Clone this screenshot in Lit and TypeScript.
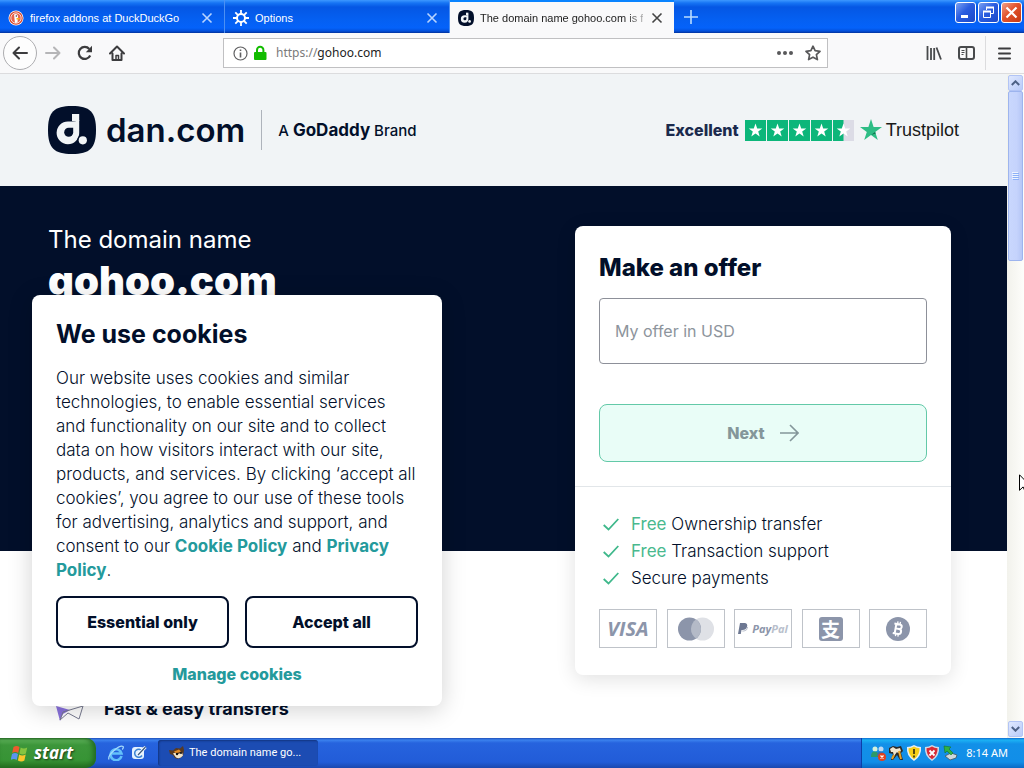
import { LitElement, html, css } from "lit";
import { customElement } from "lit/decorators.js";

@customElement("browser-chrome")
class BrowserChrome extends LitElement {
  static styles = css`
    :host { display: block; font: 12px/16px "Noto Sans", "Open Sans", sans-serif; }
    button { font: inherit; color: inherit; background: none; border: 0; padding: 0; display: flex; align-items: center; justify-content: center; }
    svg { display: block; flex: none; }
    .tabs { display: flex; height: 33px; box-sizing: border-box; color: #fff; background: linear-gradient(#3d98ff 0, #1674f4 3px, #0557e4 7px, #0560f2 20px, #0462fa 28px, #0350da 31px, #02329c 33px); }
    .tab { display: flex; align-items: center; gap: 6px; width: 225px; box-sizing: border-box; padding: 2px 9px 0 8px; border-right: 1px solid #4c90f3; font: 11px/16px "Liberation Sans", sans-serif; }
    .tab .label { flex: 1; min-width: 0; white-space: nowrap; overflow: hidden; }
    .tab button { width: 16px; height: 16px; }
    .tab.active { color: #222; background: #f9f9fa; border-right: 0; border-top: 2px solid #0a84ff; padding-top: 0; width: 224px; }
    .tab.active .label { mask-image: linear-gradient(to right, #000 145px, transparent 172px); }
    .add { width: 34px; }
    .controls { margin-left: auto; display: flex; gap: 2px; padding: 2px 2px 0 0; }
    .controls button { width: 21px; height: 21px; border: 1px solid #fff; border-radius: 3px; background: linear-gradient(135deg, #7ba1f2, #2a5de0 45%, #1c49c8); }
    .controls .close { background: linear-gradient(135deg, #f0a08a, #e2532c 45%, #c53a14); }
    .bar { display: flex; align-items: center; height: 41px; box-sizing: border-box; padding: 0 11px 0 3px; background: #f9f9fa; border-bottom: 1px solid #dcdcde; }
    .back { width: 34px; height: 34px; border: 1px solid #adadb0; border-radius: 50%; background: #fdfdfd; }
    .nav { display: flex; align-items: center; flex: none; }
    .nav .tool { width: 32px; height: 32px; }
    .url { flex: 1; margin: 0 90px; height: 30px; box-sizing: border-box; border: 1px solid #c0c0c2; background: #fff; display: flex; align-items: center; padding: 0 6px 0 8px; gap: 4px; }
    .field { flex: 1; min-width: 0; display: grid; padding-left: 4px; }
    .field input, .field span { grid-area: 1 / 1; font: inherit; }
    .field input { border: 0; padding: 0; background: none; outline: none; color: transparent; min-width: 0; }
    .field span { pointer-events: none; color: #222; white-space: nowrap; }
    .field i { font-style: normal; color: #7a7a7a; }
    .url .icon { width: 16px; height: 16px; }
    .actions { display: flex; gap: 12px; }
    .right { display: flex; align-items: center; }
    .right button { width: 32px; height: 32px; }
    .sep { width: 1px; height: 34px; background: #dcdcde; margin: 0 3px; }
    .right .menu { width: 24px; padding-left: 6px; }
  `;
  x(color: string) {
    return html`<svg width="12" height="12" viewBox="0 0 12 12"><path d="M1.500 1.500l9 9m0-9l-9 9" stroke=${color} stroke-width="1.600" fill="none"/></svg>`;
  }
  render() {
    return html`
      <div class="tabs">
        <div class="tab">
          <svg width="16" height="16" viewBox="0 0 16 16"><circle cx="8" cy="8" r="7.500" fill="#fff"/><circle cx="8" cy="8" r="6.800" fill="#d9472b"/><circle cx="8" cy="8" r="5.200" fill="#e8634a" stroke="#fff" stroke-width=".8"/><path d="M6 4.500q3-1.500 4 1.500l-.5 6.500-2.500.4z" fill="#fff"/><path d="M8.500 8h3.500l-1 1.500H8.500z" fill="#f6b51e"/><circle cx="8.300" cy="6" r=".7" fill="#223"/></svg>
          <span class="label">firefox addons at DuckDuckGo</span>
          <button aria-label="Close tab">${this.x("#b8d4ff")}</button>
        </div>
        <div class="tab">
          <svg width="16" height="16" viewBox="0 0 16 16" fill="none" stroke="#fff"><circle cx="8" cy="8" r="4" stroke-width="2"/><path d="M8 0v4M8 12v4M0 8h4M12 8h4M2.300 2.300l3 3M10.700 10.700l3 3M2.300 13.700l3-3M10.700 5.300l3-3" stroke-width="1.800"/></svg>
          <span class="label">Options</span>
          <button aria-label="Close tab">${this.x("#b8d4ff")}</button>
        </div>
        <div class="tab active">
          <dan-mark style="--size:16px"></dan-mark>
          <span class="label">The domain name gohoo.com is fo</span>
          <button aria-label="Close tab">${this.x("#444")}</button>
        </div>
        <button class="add" aria-label="New tab"><svg width="14" height="14" viewBox="0 0 14 14"><path d="M7 0v14M0 7h14" stroke="#b9dcff" stroke-width="1.600"/></svg></button>
        <div class="controls">
          <button aria-label="Minimise"><svg width="15" height="15"><path d="M3 10h7v3H3z" fill="#fff"/></svg></button>
          <button aria-label="Restore"><svg width="15" height="15" fill="none" stroke="#fff"><path d="M5.500 5V2.500h7v6H10" /><path d="M5 2.500h8M2 6.500h8" stroke-width="2"/><path d="M2.500 6.500h7v6h-7z"/></svg></button>
          <button class="close" aria-label="Close"><svg width="15" height="15"><path d="M2.500 2.500l10 10m0-10l-10 10" stroke="#fff" stroke-width="2.200"/></svg></button>
        </div>
      </div>
      <div class="bar">
        <div class="nav">
          <button class="back" aria-label="Back"><svg width="16" height="16" viewBox="0 0 16 16" fill="none" stroke="#3c3c3e" stroke-width="2" stroke-linecap="round" stroke-linejoin="round"><path d="M15 8H1.500M7 2.500L1.500 8 7 13.500"/></svg></button>
          <button class="tool" aria-label="Forward"><svg width="16" height="16" viewBox="0 0 16 16" fill="none" stroke="#b5b5b7" stroke-width="2" stroke-linecap="round" stroke-linejoin="round"><path d="M1 8h13.500M9 2.500L14.500 8 9 13.500"/></svg></button>
          <button class="tool" aria-label="Reload"><svg width="16" height="16" viewBox="0 0 16 16" fill="none" stroke="#3c3c3e" stroke-width="2.200"><path d="M13.200 10.500A6 6 0 1 1 12.300 4"/><path d="M15 .8v6.400H8.800z" fill="#3c3c3e" stroke="none"/></svg></button>
          <button class="tool" aria-label="Home"><svg width="16" height="16" viewBox="0 0 16 16" fill="none" stroke="#3c3c3e" stroke-width="2" stroke-linecap="round" stroke-linejoin="round"><path d="M1 8.500L8 1.500l7 7M3.500 8.500V15h9V8.500"/><path d="M7 15v-4.500h2.500V15" stroke-width="1.500"/></svg></button>
        </div>
        <div class="url">
          <button class="icon" aria-label="Site information"><svg width="15" height="15" viewBox="0 0 15 15" fill="none" stroke="#606062"><circle cx="7.500" cy="7.500" r="6.500" stroke-width="1.200"/><path d="M7.500 6.500v5M7.500 3.500v1.600" stroke-width="1.600"/></svg></button>
          <svg width="16" height="16" viewBox="0 0 16 16"><rect x="2" y="7" width="12.500" height="8" rx="1" fill="#12bc00"/><path d="M5 8V5a3.200 3.200 0 0 1 6.400 0v3" fill="none" stroke="#12bc00" stroke-width="2"/></svg>
          <label class="field"><input aria-label="Address" value="https://gohoo.com"><span aria-hidden="true"><i>https://</i>gohoo.com</span></label>
          <div class="actions">
            <button class="icon" aria-label="Page actions"><svg width="16" height="4" fill="#58585a"><circle cx="2" cy="2" r="2"/><circle cx="8" cy="2" r="2"/><circle cx="14" cy="2" r="2"/></svg></button>
            <button class="icon" aria-label="Bookmark"><svg width="16" height="16" viewBox="0 0 16 16"><path d="M8 1.200l2.100 4.500 4.900.6-3.600 3.400 1 4.900L8 12.200l-4.400 2.400 1-4.900L1 6.300l4.900-.6z" fill="none" stroke="#58585a" stroke-width="1.700" stroke-linejoin="round"/></svg></button>
          </div>
        </div>
        <div class="right">
          <button aria-label="Library"><svg width="16" height="16" viewBox="0 0 16 16" stroke="#484a4c" stroke-width="1.800"><path d="M1.500 1v14M5 3v12M8.200 3v12M10.500 2.500l4.500 12"/></svg></button>
          <button aria-label="Sidebars"><svg width="17" height="16" viewBox="0 0 17 16" fill="none" stroke="#484a4c"><rect x="1" y="2" width="15" height="12" rx="2" stroke-width="2"/><path d="M8.500 2v12" stroke-width="1.600"/><path d="M3.500 5.500h3M3.500 7.500h3M3.500 9.500h2"/></svg></button>
          <span class="sep"></span>
          <button class="menu" aria-label="Menu"><svg width="13" height="13" stroke="#3c3c3e" stroke-width="2" stroke-linecap="round"><path d="M1 1.500h11M1 6.500h11M1 11.500h11"/></svg></button>
        </div>
      </div>`;
  }
}

@customElement("dan-mark")
class DanMark extends LitElement {
  static styles = css`
    :host { display: block; flex: none; width: var(--size); height: var(--size); }
    svg { display: block; width: 100%; height: 100%; }
  `;
  render() {
    return html`<svg viewBox="0 0 48 48"><path d="M24 0C42 0 48 6 48 24S42 48 24 48 0 42 0 24 6 0 24 0z" fill="#020f2a"/><path d="M24 8h7.200v7H24z" fill="#f1f4f6"/><path d="M20 15.600h3.600q3.600 0 7.600-1.600V27A11.300 11.300 0 1 1 20 15.600z" fill="#f1f4f6"/><path d="M20.700 21.800h4.500V26.300a4.500 4.500 0 1 1-4.500-4.500z" fill="#020f2a"/><circle cx="34.800" cy="34.300" r="5.600" fill="#020f2a"/><circle cx="34.800" cy="34.300" r="4.100" fill="#f1f4f6"/></svg>`;
  }
}

@customElement("site-header")
class SiteHeader extends LitElement {
  static styles = css`
    :host { display: flex; justify-content: space-between; align-items: center; box-sizing: border-box; min-height: 112px; padding: 32px 48px; background: #f1f4f6; color: #020f2a; }
    .logo { display: flex; align-items: center; color: inherit; text-decoration: none; }
    .name { font: 600 33px/40px Inter, sans-serif; margin-left: 10px; }
    .rule { width: 1px; height: 40px; margin: 0 16px; background: #aeb3bb; }
    .brand { font: 500 15px/20px Inter, sans-serif; }
    .brand b { font-weight: 700; font-size: 17px; }
    .trust { display: flex; align-items: center; gap: 6px; color: #1b2a4d; text-decoration: none; font: 800 16px/24px Inter, sans-serif; }
    .stars, .pilot { display: flex; }
    .stars { gap: 1px; }
    .pilot { align-items: center; color: #191919; font: 400 18px/24px "Liberation Sans", sans-serif; gap: 4px; }
    svg { display: block; }
  `;
  render() {
    const star = "M10.500 3.500l1.700 4.900h5.100l-4.100 3.100 1.500 5-4.200-3-4.200 3 1.500-5-4.100-3.100h5.100z";
    return html`
      <a class="logo" href="#">
        <dan-mark style="--size:48px"></dan-mark>
        <span class="name">dan.com</span><span class="rule"></span>
        <span class="brand">A <b>GoDaddy</b> Brand</span>
      </a>
      <a class="trust" href="#">
        <span>Excellent</span>
        <span class="stars">${[1, 1, 1, 1, 0.5].map(f => html`<svg width="21" height="21" viewBox="0 0 21 21"><rect width="21" height="21" fill="#dcdce6"/><rect width=${21 * f} height="21" fill="#0cb67a"/><path d=${star} fill="#fff"/></svg>`)}</span>
        <span class="pilot"><svg width="22" height="22" viewBox="0 0 22 22"><path d="M11 0l2.600 8H22l-6.800 5 2.600 8L11 16.100 4.200 21l2.600-8L0 8h8.400z" fill="#2ebd85"/><path d="M15.700 14.500l-.6-1.600L11 16.100z" fill="#0b6e4a"/></svg>Trustpilot</span>
      </a>`;
  }
}

@customElement("offer-card")
class OfferCard extends LitElement {
  static styles = css`
    :host { display: block; background: #fff; border-radius: 8px; color: #020f2a; box-shadow: 0 4px 20px rgba(0, 0, 0, .12); font: 300 17px/27px Inter, sans-serif; }
    form { display: block; padding: 26px 24px 24px; border-bottom: 1px solid #e2e6e9; }
    h2 { margin: 0 0 14px; font: 800 24px/32px Inter, sans-serif; }
    input { display: block; width: 100%; height: 66px; box-sizing: border-box; border: 1px solid #8d9099; border-radius: 4px; padding: 0 15px; font: 400 16px/24px Inter, sans-serif; background: #fff; }
    input::placeholder { color: #8d949c; opacity: 1; }
    button { display: flex; align-items: center; justify-content: center; gap: 15px; width: 100%; height: 58px; margin-top: 40px; border: 1px solid #63c9a8; border-radius: 8px; background: #e9fdf7; color: #84969a; font: 800 16px/24px Inter, sans-serif; }
    .more { padding: 24px 24px 27px; }
    ul { list-style: none; margin: 0 0 17px; padding: 0; }
    li { display: flex; align-items: center; gap: 12px; padding-left: 4px; }
    em { font-style: normal; font-weight: 400; color: #49b98e; }
    .pays { display: flex; justify-content: space-between; }
    svg { display: block; }
    .pay { display: flex; align-items: center; justify-content: center; width: 58px; height: 39px; box-sizing: border-box; border: 1px solid #bfc3c9; color: #8c95aa; }
    .visa { font: italic 700 20px/24px "Open Sans", sans-serif; }
    .pp { gap: 4px; font: italic 700 11px/12px "Open Sans", sans-serif; }
    .pp i { color: #b9bfcc; }
    .ali { width: 24px; height: 24px; border-radius: 3px; background: #8c95aa; color: #fff; font: 700 19px/24px "Noto Sans CJK SC", sans-serif; text-align: center; }
  `;
  item(text: string, free: boolean) {
    return html`<li><svg width="16" height="13" viewBox="0 0 16 13" fill="none" stroke="#3fb88b" stroke-width="1.800"><path d="M.7 7l4.800 4.500L15.300 1"/></svg><span>${free ? html`<em>Free</em> ` : ""}${text}</span></li>`;
  }
  render() {
    return html`
      <form>
        <h2>Make an offer</h2>
        <input aria-label="My offer in USD" placeholder="My offer in USD">
        <button type="button">Next<svg width="19" height="18" viewBox="0 0 19 18" fill="none" stroke="#84969a" stroke-width="1.600"><path d="M0 9h18M10 1l8 8-8 8"/></svg></button>
      </form>
      <div class="more">
        <ul>${this.item("Ownership transfer", true)}${this.item("Transaction support", true)}${this.item("Secure payments", false)}</ul>
        <div class="pays">
          <span class="pay visa">VISA</span>
          <span class="pay"><svg width="36" height="24"><circle cx="24.500" cy="12" r="11.500" fill="#dfe1e6"/><circle cx="11.500" cy="12" r="11.500" fill="#8c95aa"/><path d="M18 2.500a11.500 11.500 0 0 1 0 19 11.500 11.500 0 0 1 0-19z" fill="#b4bac7"/></svg></span>
          <span class="pay pp"><svg width="10" height="12" viewBox="0 0 10 12"><path d="M2 0h5q3 .5 2 4-1 3-4.500 3H3.500L2.800 11H0z" fill="#6d7892"/><path d="M4.300 8H6q3 0 3.700-4" stroke="#b9bfcc" fill="none"/></svg><span>Pay<i>Pal</i></span></span>
          <span class="pay"><span class="ali">支</span></span>
          <span class="pay"><svg width="24" height="24" viewBox="0 0 24 24"><circle cx="12" cy="12" r="12" fill="#8c95aa"/><g transform="rotate(10 12 12)" fill="none" stroke="#fff" stroke-width="2"><path d="M9.500 7v10M7.500 7.200h5.500a2.200 2.200 0 0 1 0 4.600H9.500M13 11.800a2.500 2.500 0 0 1 0 5H7.500"/><path d="M10.700 4.500V7M13.200 4.500V7M10.700 17v2.500M13.200 17v2.500" stroke-width="1.300"/></g></svg></span>
        </div>
      </div>`;
  }
}

@customElement("cookie-dialog")
class CookieDialog extends LitElement {
  static styles = css`
    :host { display: block; box-sizing: border-box; padding: 24px 24px 20px; background: #fff; border-radius: 8px; color: #020f2a; box-shadow: 0 4px 24px rgba(0, 0, 0, .18); font: 300 17px/24px Inter, sans-serif; }
    h2 { margin: 0 0 16px; font: 700 25px/31px Inter, sans-serif; }
    p { margin: 0 0 14px; white-space: nowrap; }
    a { color: #249a9c; font-weight: 700; text-decoration: none; }
    .row { display: grid; grid-template-columns: 1fr 1fr; gap: 16px; margin-bottom: 14px; }
    button { height: 52px; border: 2px solid #020f2a; border-radius: 8px; background: #fff; color: inherit; font: 800 16px/24px Inter, sans-serif; }
    .manage { text-align: center; font-size: 16px; }
    .manage a { font-weight: 800; }
  `;
  render() {
    return html`
      <h2>We use cookies</h2>
      <p>Our website uses cookies and similar<br>technologies, to enable essential services<br>and functionality on our site and to collect<br>data on how visitors interact with our site,<br>products, and services. By clicking ‘accept all<br>cookies’, you agree to our use of these tools<br>for advertising, analytics and support, and<br>consent to our <a href="#">Cookie Policy</a> and <a href="#">Privacy<br>Policy</a>.</p>
      <div class="row"><button>Essential only</button><button>Accept all</button></div>
      <div class="manage"><a href="#">Manage cookies</a></div>`;
  }
}

@customElement("scroll-bar")
class ScrollBar extends LitElement {
  static styles = css`
    :host { display: flex; flex-direction: column; align-items: stretch; width: 17px; box-sizing: border-box; padding: 1px 1px; background: linear-gradient(90deg, #f2f2ec, #fdfdfa); }
    button { height: 16px; padding: 0; border: 1px solid #b2c4f5; border-radius: 2px; background: linear-gradient(135deg, #dfe8ff, #b9cbf8); display: flex; align-items: center; justify-content: center; flex: none; }
    .track { flex: 1; display: flex; flex-direction: column; }
    .thumb { height: 27%; flex: none; box-sizing: border-box; border: 1px solid #9db4ee; border-radius: 2px; background: linear-gradient(90deg, #c9d7fd, #c5d3fc 60%, #b6c7f6); display: flex; align-items: center; justify-content: center; }
  `;
  render() {
    const arrow = (d: string) => html`<svg width="9" height="6"><path d=${d} fill="none" stroke="#4d6185" stroke-width="2"/></svg>`;
    return html`
      <button aria-label="Scroll up">${arrow("M.8 5l3.700-3.700L8.200 5")}</button>
      <div class="track"><div class="thumb"><svg width="7" height="8"><path d="M0 .5h6M0 2.500h6M0 4.500h6M0 6.500h6" stroke="#eef4fe"/><path d="M1 1.500h6M1 3.500h6M1 5.500h6M1 7.500h6" stroke="#8cb0f8"/></svg></div></div>
      <button aria-label="Scroll down">${arrow("M.8 1l3.700 3.700L8.200 1")}</button>`;
  }
}

@customElement("task-bar")
class TaskBar extends LitElement {
  static styles = css`
    :host { display: flex; height: 30px; color: #fff; background: linear-gradient(#1f4fb8 0, #3b82ee 2px, #2663de 5px, #225cd8 24px, #1b47ae 30px); font: 11px/16px "Noto Sans", sans-serif; }
    button { border: 0; color: inherit; }
    svg { display: block; flex: none; }
    .start { width: 96px; display: flex; align-items: center; gap: 5px; padding: 0 0 0 11px; border-radius: 0 10px 10px 0; background: linear-gradient(#2c6b2a 0, #5cb158 2px, #3c963a 7px, #379435 22px, #24701f 30px); box-shadow: inset -3px 0 5px #226a22; font: italic 700 17px/24px "Open Sans", sans-serif; text-shadow: 1px 1px 2px #1b3a16; }
    .quick { display: flex; align-items: center; gap: 7px; padding: 0 11px 0 12px; }
    .task { display: flex; align-items: center; gap: 4px; width: 160px; margin: 2px 0; padding: 2px 11px; border-radius: 3px; background: #1c4cb3; box-shadow: inset 1px 1px 2px #12347f; font: 11px/16px Roboto, sans-serif; white-space: nowrap; }
    .tray { margin-left: auto; width: 163px; box-sizing: border-box; display: flex; align-items: center; gap: 2px; padding: 0 16px 0 8px; border-left: 1px solid #0c3fa8; background: linear-gradient(#0f6bd0 0, #1cb2f4 2px, #1290e8 6px, #118ee8 24px, #0b69c4 30px); }
    .tray span { margin-left: auto; }
  `;
  render() {
    const shield = "M8 0q3 2 7 2 1 9-7 14Q0 11 1 2q4 0 7-2z";
    return html`
      <button class="start"><svg width="18" height="17" viewBox="0 0 18 17"><path d="M2.500 2q3-2 6 0L7.200 8q-3-2-6 0z" fill="#ee5b2e"/><path d="M9.700 2.500q3 2 6.500 0l-1.300 6q-3 2-6.500 0z" fill="#86c440"/><path d="M1 9q3-2 6 0l-1.300 6q-3-2-6 0z" fill="#5a95f0"/><path d="M8.200 9.500q3 2 6.500 0l-1.300 6q-3 2-6.500 0z" fill="#fbc52c"/></svg>start</button>
      <div class="quick">
        <svg width="16" height="16" viewBox="0 0 16 16"><path d="M13.500 11A5.500 5.500 0 1 1 13.500 8.500H4" fill="none" stroke="#63c1fa" stroke-width="2.600"/><path d="M1 14.500Q-.5 11 6 5.500T15 1.500q1 1-.8 3" fill="none" stroke="#a6dcfc" stroke-width="1.200"/></svg>
        <svg width="16" height="16" viewBox="0 0 16 16"><rect x="1" y="2" width="12" height="12" rx="3" fill="#e4f2ff"/><path d="M11 6a4 4 0 1 0 0 4.500" fill="none" stroke="#3b83d3" stroke-width="1.500"/><path d="M7 10l7.500-8" stroke="#fff" stroke-width="3"/><path d="M7 10l7.500-8" stroke="#3a5a80" stroke-width="1.200"/></svg>
      </div>
      <button class="task"><svg width="16" height="16" viewBox="0 0 16 16"><path d="M0 5l4 .5L7 3l4 .5L14 1l1 4-1 6q-4 4-8 2L4 10 1 9z" fill="#5a3a20"/><path d="M4 8.500q3-2 4 1l5-2 1 3q-3 4-7 2z" fill="#f0e4cc"/><path d="M5 6.500l5-2 2 2-5 2z" fill="#e18a25"/><circle cx="8" cy="9" r="1.200" fill="#111"/><circle cx="12" cy="8" r="1" fill="#111"/></svg>The domain name go...</button>
      <div class="tray">
        <svg width="16" height="16" viewBox="0 0 16 16"><circle cx="5" cy="4" r="2.500" fill="#d4f2dc"/><circle cx="11" cy="4" r="2.500" fill="#bdd9f4"/><path d="M1 12q0-6 4-5.500T9 12z" fill="#2b9a6b"/><path d="M7 11q0-5 4-4.500T15 11z" fill="#3a6cb2"/><circle cx="12" cy="12" r="4" fill="#e3411e"/><path d="M10.500 10.500l3 3m0-3l-3 3" stroke="#fff" stroke-width="1.300"/></svg>
        <svg width="16" height="16" viewBox="0 0 16 16"><path d="M1 3l4-2 4 1 4-1 2 5-2 2 2 7h-3l-3-5-4 5H3l2-6-4-1z" fill="#2c2a26"/><path d="M2 4l3-2 3 2 4-1 1 3-3 2-1-1-3 4-1-4H3z" fill="#efe6d0"/><path d="M11 6l2 8M6 10l-2 4" stroke="#eaa327" stroke-width="2"/></svg>
        <svg width="16" height="16" viewBox="0 0 16 16"><path d=${shield} fill="#e9eff4"/><path d="M8 1.500q2.500 1.500 5.500 1.700Q14 10 8 14.200 2 10 2.500 3.200 5.500 3 8 1.500z" fill="#f6cf18"/><path d="M8 4v5M8 10.500v2" stroke="#443a10" stroke-width="1.800"/></svg>
        <svg width="16" height="16" viewBox="0 0 16 16"><path d=${shield} fill="#cfdbe8"/><path d="M8 1.500q2.500 1.500 5.500 1.700Q14 10 8 14.200 2 10 2.500 3.200 5.500 3 8 1.500z" fill="#d92b36"/><path d="M5.500 5.500l5 5m0-5l-5 5" stroke="#fff" stroke-width="1.800"/></svg>
        <svg width="16" height="16" viewBox="0 0 16 16"><path d="M3 11l6-3 6 2-1 3-6 2z" fill="#cfd8dc" stroke="#44565f" stroke-width=".8"/><path d="M2 1l7 1-2 2 4 4-2 2-4-4-2 2z" fill="#30b243" stroke="#14752a" stroke-width=".6"/></svg>
        <span>8:14 AM</span>
      </div>`;
  }
}

@customElement("app-root")
class AppRoot extends LitElement {
  static styles = css`
    :host { display: flex; flex-direction: column; height: 100vh; overflow: hidden; background: #fff; position: relative; }
    browser-chrome, task-bar { flex: none; }
    .view { flex: 1; min-height: 0; display: flex; }
    .page { flex: 1; min-width: 0; position: relative; overflow: hidden; background: #fff; }
    .hero { display: flex; justify-content: space-between; align-items: flex-start; padding: 40px 56px 0 48px; background: #020f2a; color: #fff; }
    .intro { margin: 0; font: 400 24px/28px Inter, sans-serif; }
    .intro strong { display: block; font: 900 40px/54px Inter, sans-serif; }
    offer-card { width: 376px; margin-bottom: -124px; }
    .feature { display: flex; align-items: center; gap: 20px; margin: 140px 48px 0; color: #020f2a; }
    .feature h3 { margin: 0; font: 700 18px/24px Inter, sans-serif; }
    .feature svg { display: block; }
    cookie-dialog { position: absolute; left: 32px; bottom: 32px; width: 410px; }
    .cursor { position: absolute; left: calc(100% - 5px); top: 474px; }
  `;
  render() {
    return html`
      <browser-chrome></browser-chrome>
      <div class="view">
        <main class="page">
          <site-header></site-header>
          <section class="hero">
            <h1 class="intro">The domain name<strong>gohoo.com</strong></h1>
            <offer-card></offer-card>
          </section>
          <section class="feature">
            <svg width="36" height="36" viewBox="0 0 36 36"><path d="M8 15l14 4-7 4-3 7z" fill="#8a72dd"/><path d="M12 29l8-7 11 6 4-13-20 6z" fill="none" stroke="#777a90"/></svg>
            <h3>Fast &amp; easy transfers</h3>
          </section>
          <cookie-dialog></cookie-dialog>
        </main>
        <scroll-bar></scroll-bar>
      </div>
      <task-bar></task-bar>
      <svg class="cursor" width="12" height="19" viewBox="0 0 12 19"><path d="M.5.800v15.500l3.600-3.400 2.300 5.300 2.300-1-2.300-5.200h5z" fill="#fff" stroke="#000"/></svg>`;
  }
}
